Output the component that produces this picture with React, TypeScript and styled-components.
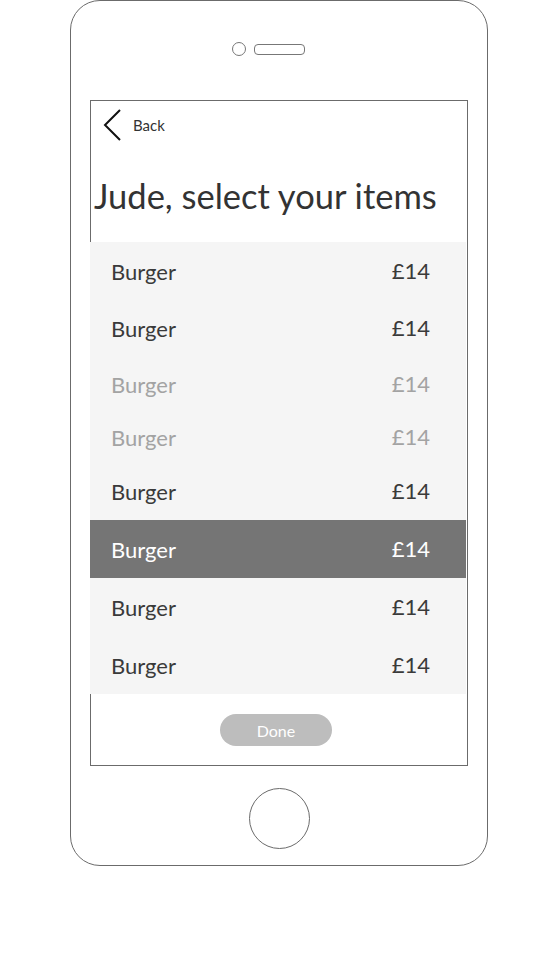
import React from "react";
import styled, { createGlobalStyle } from "styled-components";

const Global = createGlobalStyle`
  html, body { margin: 0; padding: 0; background: #fff; }
  body { font-family: "Lato", "Open Sans", sans-serif; }
`;

const Page = styled.div`
  width: 538px;
  height: 975px;
  padding-left: 70px;
  box-sizing: border-box;
`;

const Phone = styled.div`
  width: 418px;
  height: 866px;
  box-sizing: border-box;
  border: 1px solid #6b6b6b;
  border-radius: 30px;
  display: flex;
  flex-direction: column;
  align-items: center;
`;

const TopBar = styled.div`
  margin-top: 41px;
  height: 14px;
  display: flex;
  align-items: center;
  gap: 8px;
  padding-right: 22px;
`;

const Camera = styled.div`
  width: 14px;
  height: 14px;
  box-sizing: border-box;
  border: 1px solid #777;
  border-radius: 50%;
`;

const Speaker = styled.div`
  width: 51px;
  height: 11px;
  box-sizing: border-box;
  border: 1px solid #777;
  border-radius: 4px;
`;

const Screen = styled.div`
  margin-top: 44px;
  width: 378px;
  height: 666px;
  box-sizing: border-box;
  border: 1px solid #6b6b6b;
  display: flex;
  flex-direction: column;
`;

const BackRow = styled.div`
  display: flex;
  align-items: center;
  height: 30px;
  margin-top: 9px;
  padding-left: 12px;
  gap: 12px;
  color: #333;
  font-size: 15px;
`;

const Title = styled.h1`
  margin: 0;
  padding-left: 3px;
  height: 102px;
  box-sizing: border-box;
  padding-top: 36px;
  font-weight: 400;
  font-size: 34.5px;
  line-height: 40px;
  color: #333;
  white-space: nowrap;
`;

const List = styled.div`
  margin-left: -1px;
  width: 376px;
  background: #f5f5f5;
  display: flex;
  flex-direction: column;
`;

const Row = styled.div<{ $h: number; $tone: "normal" | "faded" | "active" }>`
  height: ${(p) => p.$h}px;
  display: flex;
  align-items: center;
  justify-content: space-between;
  padding: 0 36px 0 21px;
  font-size: 22px;
  background: ${(p) => (p.$tone === "active" ? "#757575" : "transparent")};
  color: ${(p) =>
    p.$tone === "active" ? "#fff" : p.$tone === "faded" ? "#a3a3a3" : "#3a3a3a"};
`;

const Price = styled.span`
  margin-top: -2px;
`;

const Footer = styled.div`
  flex: 1;
  display: flex;
  justify-content: center;
  padding-top: 20px;
  padding-right: 6px;
`;

const DoneButton = styled.div`
  width: 112px;
  height: 32px;
  border-radius: 16px;
  background: #bdbdbd;
  color: #fff;
  font-size: 16px;
  display: flex;
  align-items: center;
  justify-content: center;
`;

const HomeButton = styled.div`
  margin-top: 22px;
  width: 61px;
  height: 61px;
  box-sizing: border-box;
  border: 1px solid #6b6b6b;
  border-radius: 50%;
`;

const rows: { h: number; tone: "normal" | "faded" | "active" }[] = [
  { h: 58, tone: "normal" },
  { h: 57, tone: "normal" },
  { h: 55, tone: "faded" },
  { h: 50, tone: "faded" },
  { h: 58, tone: "normal" },
  { h: 58, tone: "active" },
  { h: 59, tone: "normal" },
  { h: 57, tone: "normal" },
];

export default function App() {
  return (
    <Page>
      <Global />
      <Phone>
        <TopBar>
          <Camera />
          <Speaker />
        </TopBar>
        <Screen>
          <BackRow>
            <svg width="18" height="32" viewBox="0 0 18 32">
              <path d="M17 1 L2 16 L17 31" fill="none" stroke="#111" strokeWidth="2" />
            </svg>
            <span>Back</span>
          </BackRow>
          <Title>Jude, select your items</Title>
          <List>
            {rows.map((r, i) => (
              <Row key={i} $h={r.h} $tone={r.tone}>
                <span>Burger</span>
                <Price>£14</Price>
              </Row>
            ))}
          </List>
          <Footer>
            <DoneButton>Done</DoneButton>
          </Footer>
        </Screen>
        <HomeButton />
      </Phone>
    </Page>
  );
}
